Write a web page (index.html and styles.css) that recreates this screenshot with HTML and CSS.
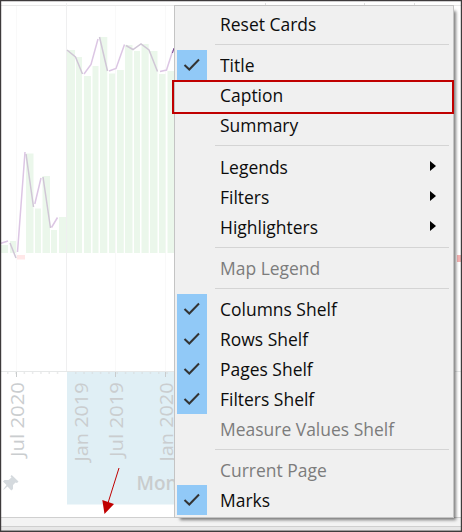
FILE: index.html
```html
<!DOCTYPE html>
<html lang="en">
<head>
<meta charset="utf-8">
<title>Worksheet</title>
<link rel="stylesheet" href="styles.css">
</head>
<body>
<svg class="sheet" width="462" height="532" viewBox="0 0 462 532">
  <rect width="462" height="532" fill="#fff"/>
  <path d="M16.5 5V371M115.5 5V371M165.5 5V371" stroke="#f9f9f9"/>
  <path d="M0 5.5H462" stroke="#e8e8e8"/>
  <path d="M66.5 3V372" stroke="#efeff0"/>
  <path d="M265.500 3v3M364.500 3v3M414.500 3v3" stroke="#dedede"/>
  <path fill="#ebf7eb" d="M1 245h7v8h-7zM10 241h6v12h-6zM26 153.500h7.500v99.500h-7.500zM35 208.500h6v44.500h-6zM42.500 176h7.500v77h-7.500zM51 230h6v23h-6zM59 217h7v36h-7zM67 50h8v203h-8zM76 57h6v196h-6zM84 76h7v177h-7zM92.500 66h6v187h-6zM100 37h7.300v216h-7.300zM109 73.500h6v179.500h-6zM117 70h6.800v183h-6.800zM125 45h7.500v208h-7.500zM134 51h6v202h-6zM141.500 44h7.200v209h-7.200zM150 51h7.500v202h-7.500zM159 74h6.500v179h-6.500zM167.500 71h7v182h-7z"/>
  <path fill="#ffe7e8" d="M17 255h8v4.500h-8z"/>
  <path fill="#f5b3b3" d="M457 255h4v7h-4z"/>
  <g fill="none" stroke-width="1.500">
    <path stroke="#dcc6e4" d="M1 243.300L8 241M17.500 252L25 152M34.800 204L41 178M51.500 227.500L57.500 217.500M84 74L91 64.500L98 39M109 71L116 68.500L124.500 44.500M160 71.500L166.500 70L173 50"/>
    <path stroke="#d0c6d6" d="M10 243L16 258M26 154L33.500 207M43 177L50.500 228M67 50L75.500 57L82.500 74M99.500 37L107.500 71M126 45.500L133 49.500L141 44L149 50L157.500 71.500"/>
  </g>
  <path d="M172.500 53L174 48" stroke="#75418c"/>
  <rect x="67" y="372" width="107" height="132.500" fill="#e0eff5"/>
  <path d="M0 371.500H174M455 371.500H462" stroke="#e6e8e8"/>
  <path d="M7 373h54M75 373h98" stroke="#d5d7d8" stroke-dasharray="1.500 6.800"/>
  <path d="M16.500 372v5M115.500 372v5M165.500 372v5" stroke="#c9cccd"/>
  <g class="axis">
    <text transform="translate(23.500 457) rotate(-90)" textLength="75" lengthAdjust="spacingAndGlyphs">Jul 2020</text>
    <text transform="translate(87.500 461.500) rotate(-90)" textLength="79" lengthAdjust="spacingAndGlyphs">Jan 2019</text>
    <text transform="translate(122.500 457) rotate(-90)" textLength="75" lengthAdjust="spacingAndGlyphs">Jul 2019</text>
    <text transform="translate(172.500 461.500) rotate(-90)" textLength="79" lengthAdjust="spacingAndGlyphs">Jan 2020</text>
  </g>
  <text class="axis-title" x="136.500" y="490">Mon</text>
  <path fill="#d5dade" d="M11.700 475L18.500 481.500L17 483L15.500 482.500L13 485L13 489L11.300 490.500L7.500 486.500L3.500 490L3.500 489L6.500 485L3 481.500L4.500 480H8.500L11.500 477.500L10.500 476.200Z"/>
  <path d="M119 468L108 503" stroke="#c00000"/>
  <path fill="#c00000" d="M102.300 500L114 504L104.500 514Z"/>
  <rect y="517" width="462" height="9" fill="#f3f3f3"/>
  <path d="M1 517.500H462M1 526.500H462" stroke="#cfcfcf"/>
  <rect y="527" width="462" height="3" fill="#e7e7e7"/>
  <path d="M0 .500H462M.500 0V532M461.500 0V532M0 531.300H462" stroke="#3e3b3c" stroke-width="1.400"/>
</svg>

<nav class="menu">
  <div class="item"><span class="label">Reset Cards</span></div>
  <hr>
  <div class="item checked"><svg class="check" viewBox="0 0 30 30"><path d="M7.500 15L12.300 19.500L22 9.500"/></svg><span class="label">Title</span></div>
  <div class="item focus"><span class="label">Caption</span></div>
  <div class="item"><span class="label">Summary</span></div>
  <hr>
  <div class="item"><span class="label">Legends</span><i class="arrow"></i></div>
  <div class="item"><span class="label">Filters</span><i class="arrow"></i></div>
  <div class="item"><span class="label">Highlighters</span><i class="arrow"></i></div>
  <hr>
  <div class="item disabled"><span class="label">Map Legend</span></div>
  <hr>
  <div class="item checked"><svg class="check" viewBox="0 0 30 30"><path d="M7.500 15L12.300 19.500L22 9.500"/></svg><span class="label">Columns Shelf</span></div>
  <div class="item checked"><svg class="check" viewBox="0 0 30 30"><path d="M7.500 15L12.300 19.500L22 9.500"/></svg><span class="label">Rows Shelf</span></div>
  <div class="item checked"><svg class="check" viewBox="0 0 30 30"><path d="M7.500 15L12.300 19.500L22 9.500"/></svg><span class="label">Pages Shelf</span></div>
  <div class="item checked"><svg class="check" viewBox="0 0 30 30"><path d="M7.500 15L12.300 19.500L22 9.500"/></svg><span class="label">Filters Shelf</span></div>
  <div class="item disabled"><span class="label">Measure Values Shelf</span></div>
  <hr>
  <div class="item disabled"><span class="label">Current Page</span></div>
  <div class="item checked"><svg class="check" viewBox="0 0 30 30"><path d="M7.500 15L12.300 19.500L22 9.500"/></svg><span class="label">Marks</span></div>
</nav>
</body>
</html>
```
FILE: styles.css
```css
body {
  margin: 0;
  width: 462px;
  height: 532px;
  position: relative;
  overflow: hidden;
  font-family: "Open Sans", "Noto Sans", sans-serif;
}

.sheet {
  display: block;
}

.axis {
  font-size: 19px;
  fill: #cacdcf;
}

.axis-title {
  font-size: 19px;
  font-weight: 600;
  fill: #c9cccd;
}

.menu {
  position: absolute;
  left: 174px;
  top: 5px;
  width: 280px;
  height: 513px;
  box-sizing: border-box;
  padding: 3px 2px 0;
  background: #f0f0f0;
  border: 1px solid #c4c4c4;
  box-shadow: 4px 4px 3px -2px rgba(0, 0, 0, 0.5);
}

.item {
  position: relative;
  display: grid;
  grid-template-columns: 30px 1fr 21px;
  column-gap: 13px;
  align-items: center;
  height: 30px;
  font-size: 18.8px;
  line-height: 30px;
  color: #0c0c0c;
}

.label {
  grid-column: 2;
  grid-row: 1;
  white-space: nowrap;
  transform: scaleX(0.93);
  transform-origin: left;
}

.disabled {
  color: #7c7c7c;
}

/* Highlight frame reaches slightly past the menu edge and the next row. */
.focus::after {
  content: "";
  position: absolute;
  top: 0;
  left: -5px;
  right: -3px;
  height: 30px;
  border: 2px solid #c00000;
}

.check {
  grid-column: 1;
  grid-row: 1;
  width: 30px;
  height: 30px;
  background: #91c9f7;
  fill: none;
  stroke: #333;
  stroke-width: 2;
}

.arrow {
  grid-column: 3;
  grid-row: 1;
  width: 0;
  margin-bottom: 1px;
  border-left: 6px solid #000;
  border-top: 5px solid transparent;
  border-bottom: 5px solid transparent;
}

.menu hr {
  height: 1px;
  margin: 5px 2px 5.300px 38px;
  border: 0;
  background: #d4d4d4;
}
```
